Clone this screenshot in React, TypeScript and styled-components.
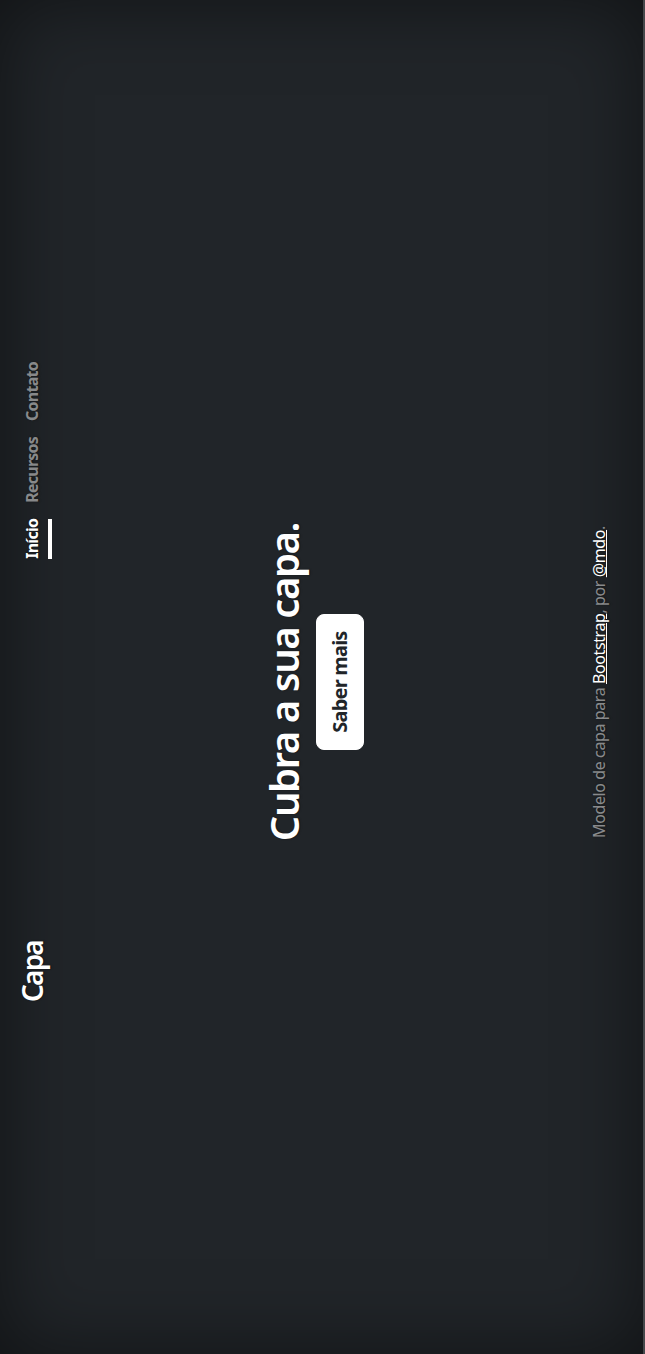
import React from "react";
import styled, { createGlobalStyle } from "styled-components";

const GlobalStyle = createGlobalStyle`
  html, body {
    margin: 0;
    padding: 0;
    background: #45484b;
    overflow: hidden;
  }
  * { box-sizing: border-box; }
`;

const Stage = styled.div`
  width: 645px;
  height: 1354px;
  overflow: hidden;
  background: #45484b;
`;

const Cover = styled.div`
  width: 1354px;
  height: 643px;
  padding-right: 10px;
  transform-origin: 0 0;
  transform: translateY(1354px) rotate(-90deg);
  display: flex;
  background: #212529;
  box-shadow: inset 0 0 5rem rgba(0, 0, 0, 0.5);
  color: #fff;
  text-align: center;
  text-shadow: 0 0.05rem 0.1rem rgba(0, 0, 0, 0.5);
  font-family: "Noto Sans", "Open Sans", sans-serif;
  font-size: 16px;
  line-height: 1.5;
`;

const Container = styled.div`
  display: flex;
  flex-direction: column;
  width: 100%;
  max-width: 42em;
  height: 100%;
  padding: 1rem;
  margin: 0 auto;
`;

const Header = styled.header`
  margin-bottom: auto;
  display: flex;
  justify-content: space-between;
  align-items: flex-start;
`;

const Brand = styled.h3`
  margin: 0;
  font-size: 1.75rem;
  font-weight: 600;
  line-height: 1.2;
  letter-spacing: -1.8px;
`;

const Nav = styled.nav`
  display: flex;
`;

const NavLink = styled.a<{ $active?: boolean }>`
  margin-left: 1rem;
  padding: 0.25rem 0;
  font-weight: 700;
  letter-spacing: -0.75px;
  color: ${(p) => (p.$active ? "#fff" : "rgba(255, 255, 255, 0.5)")};
  text-decoration: none;
  border-bottom: 0.25rem solid ${(p) => (p.$active ? "#fff" : "transparent")};
`;

const Main = styled.main`
  padding: 0 1rem;
`;

const Title = styled.h1`
  margin: 0 0 0.5rem;
  font-size: 2.5rem;
  font-weight: 600;
  line-height: 1.2;
  letter-spacing: -1.4px;
`;

const Lead = styled.p`
  margin: 0 0 1rem;
  font-size: 1.25rem;
  font-weight: 300;
`;

const Button = styled.a`
  display: inline-block;
  padding: 0.5rem 1rem;
  font-size: 1.25rem;
  font-weight: 700;
  line-height: 1.5;
  letter-spacing: -0.8px;
  color: #212529;
  background: #fff;
  border: 1px solid #fff;
  border-radius: 0.5rem;
  text-decoration: none;
  text-shadow: none;
`;

const Footer = styled.footer`
  margin-top: auto;
  color: rgba(255, 255, 255, 0.5);
`;

const FooterText = styled.p`
  margin: 0 0 1rem;
  letter-spacing: -0.4px;
`;

const FooterLink = styled.a`
  color: #fff;
  text-decoration: underline;
`;

export default function App() {
  return (
    <Stage>
      <GlobalStyle />
      <Cover>
        <Container>
          <Header>
            <Brand>Capa</Brand>
            <Nav>
              <NavLink $active href="#">Início</NavLink>
              <NavLink href="#">Recursos</NavLink>
              <NavLink href="#">Contato</NavLink>
            </Nav>
          </Header>
          <Main>
            <Title>Cubra a sua capa.</Title>
            <Lead>
              <Button href="#">Saber mais</Button>
            </Lead>
          </Main>
          <Footer>
            <FooterText>
              Modelo de capa para <FooterLink href="#">Bootstrap</FooterLink>, por{" "}
              <FooterLink href="#">@mdo</FooterLink>.
            </FooterText>
          </Footer>
        </Container>
      </Cover>
    </Stage>
  );
}
